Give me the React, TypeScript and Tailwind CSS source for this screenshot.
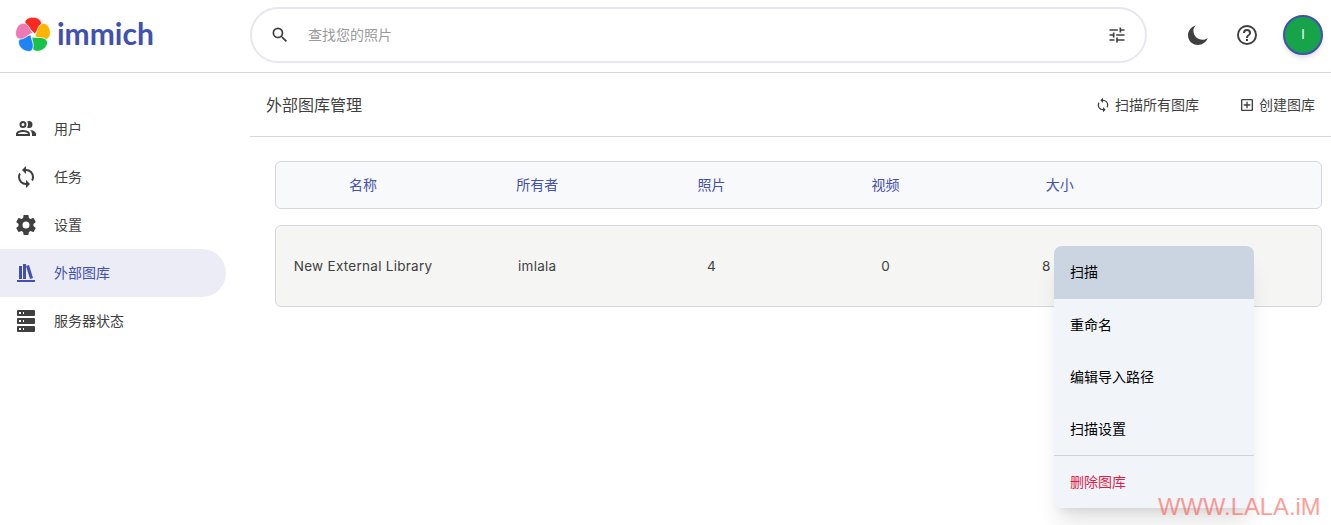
import React from "react";

const CJK = "font-['Inter','Noto_Sans_CJK_SC',sans-serif]";

const P = {
  magnify: "M9.5,3A6.5,6.5 0 0,1 16,9.5C16,11.11 15.41,12.59 14.44,13.73L14.71,14H15.5L20.5,19L19,20.5L14,15.5V14.71L13.73,14.44C12.59,15.41 11.11,16 9.5,16A6.5,6.5 0 0,1 3,9.5A6.5,6.5 0 0,1 9.5,3M9.5,5C7,5 5,7 5,9.5C5,12 7,14 9.5,14C12,14 14,12 14,9.5C14,7 12,5 9.5,5Z",
  tune: "M3,17V19H9V17H3M3,5V7H13V5H3M13,21V19H21V17H13V15H11V21H13M7,9V11H3V13H7V15H9V9H7M21,13V11H11V13H21M15,9H17V7H21V5H17V3H15V9Z",
  sync: "M12,18A6,6 0 0,1 6,12C6,11 6.25,10.03 6.7,9.2L5.24,7.74C4.46,8.97 4,10.43 4,12A8,8 0 0,0 12,20V23L16,19L12,15M12,4V1L8,5L12,9V6A6,6 0 0,1 18,12C18,13 17.75,13.97 17.3,14.8L18.76,16.26C19.54,15.03 20,13.57 20,12A8,8 0 0,0 12,4Z",
  cog: "M12,15.5A3.5,3.5 0 0,1 8.5,12A3.5,3.5 0 0,1 12,8.5A3.5,3.5 0 0,1 15.5,12A3.5,3.5 0 0,1 12,15.5M19.43,12.97C19.47,12.65 19.5,12.33 19.5,12C19.5,11.67 19.47,11.34 19.43,11L21.54,9.37C21.73,9.22 21.78,8.95 21.66,8.73L19.66,5.27C19.54,5.05 19.27,4.96 19.05,5.05L16.56,6.05C16.04,5.66 15.5,5.32 14.87,5.07L14.5,2.42C14.46,2.18 14.25,2 14,2H10C9.75,2 9.54,2.18 9.5,2.42L9.13,5.07C8.5,5.32 7.96,5.66 7.44,6.05L4.95,5.05C4.73,4.96 4.46,5.05 4.34,5.27L2.34,8.73C2.21,8.95 2.27,9.22 2.46,9.37L4.57,11C4.53,11.34 4.5,11.67 4.5,12C4.5,12.33 4.53,12.65 4.57,12.97L2.46,14.63C2.27,14.78 2.21,15.05 2.34,15.27L4.34,18.73C4.46,18.95 4.73,19.03 4.95,18.95L7.44,17.94C7.96,18.34 8.5,18.68 9.13,18.93L9.5,21.58C9.54,21.82 9.75,22 10,22H14C14.25,22 14.46,21.82 14.5,21.58L14.87,18.93C15.5,18.67 16.04,18.34 16.56,17.94L19.05,18.95C19.27,19.03 19.54,18.95 19.66,18.73L21.66,15.27C21.78,15.05 21.73,14.78 21.54,14.63L19.43,12.97Z",
  users: "M13.07 10.41A5 5 0 0 0 13.07 4.59A3.39 3.39 0 0 1 15 4A3.5 3.5 0 0 1 15 11A3.39 3.39 0 0 1 13.07 10.41M5.5 7.5A3.5 3.5 0 1 1 9 11A3.5 3.5 0 0 1 5.5 7.5M7.5 7.5A1.5 1.5 0 1 0 9 6A1.5 1.5 0 0 0 7.5 7.5M16 17V19H2V17S2 13 9 13 16 17 16 17M14 17C13.86 16.22 12.67 15 9 15S4.07 16.22 4 17M15.95 13A5.32 5.32 0 0 1 18 17V19H22V17S22 13.37 15.94 13Z",
  server: "M4,1H20A1,1 0 0,1 21,2V6A1,1 0 0,1 20,7H4A1,1 0 0,1 3,6V2A1,1 0 0,1 4,1M4,9H20A1,1 0 0,1 21,10V14A1,1 0 0,1 20,15H4A1,1 0 0,1 3,14V10A1,1 0 0,1 4,9M4,17H20A1,1 0 0,1 21,18V22A1,1 0 0,1 20,23H4A1,1 0 0,1 3,22V18A1,1 0 0,1 4,17M9,5H10V3H9V5M9,13H10V11H9V13M9,21H10V19H9V21M5,3V5H7V3H5M5,11V13H7V11H5M5,19V21H7V19H5Z",
  shelf: "M9 3V18H12V3H9M12 5L16 18L19 17L15 4L12 5M5 5V18H8V5H5M3 19V21H21V19H3Z",
  moon: "M10 2.2C5.4 3.6 2 7.5 2 12.2C2 17.6 6.4 22 11.8 22C16.4 22 20.3 19.1 21.8 15C20.4 16.1 18.6 16.8 16.6 16.8C11.6 16.8 7.4 12.8 7.4 7.8C7.4 5.6 8.4 3.6 10 2.2Z",
  help: "M11,18H13V16H11V18M12,2A10,10 0 0,0 2,12A10,10 0 0,0 12,22A10,10 0 0,0 22,12A10,10 0 0,0 12,2M12,20C7.59,20 4,16.41 4,12C4,7.59 7.59,4 12,4C16.41,4 20,7.59 20,12C20,16.41 16.41,20 12,20M12,6A4,4 0 0,0 8,10H10A2,2 0 0,1 12,8A2,2 0 0,1 14,10C14,12 11,11.75 11,15H13C13,12.75 16,12.5 16,10A4,4 0 0,0 12,6Z",
  plusBox: "M19,19V5H5V19H19M19,3A2,2 0 0,1 21,5V19A2,2 0 0,1 19,21H5C3.89,21 3,20.1 3,19V5C3,3.89 3.89,3 5,3H19M11,7H13V11H17V13H13V17H11V13H7V11H11V7Z",
};

function Icon({ d, size = 24, className = "" }: { d: string; size?: number; className?: string }) {
  return (
    <svg viewBox="0 0 24 24" width={size} height={size} fill="currentColor" className={`shrink-0 ${className}`}>
      <path d={d} />
    </svg>
  );
}

const petal = "M20 17C17 13.5 10.5 11 10 6C9.7 2.2 14 0.3 18 0.3C22.5 0.3 26.5 3 26.5 7C26.5 10.5 22.5 13 20 17Z";

function Logo() {
  const colors = ["#fa2921", "#ffb400", "#18c249", "#1e83f7", "#ed79b5"];
  return (
    <svg width="36" height="36" viewBox="0 0 36 36" className="shrink-0">
      {colors.map((c, i) => (
        <path key={c} d={petal} fill={c} stroke="white" strokeWidth="0.7" transform={`rotate(${i * 72} 18 18)`} />
      ))}
    </svg>
  );
}

function NavItem({ d, label, active = false }: { d: string; label: string; active?: boolean }) {
  return (
    <div className={`flex h-12 w-[226px] items-center gap-4 rounded-r-full pl-[14px] ${active ? "bg-[#ececf7] text-[#4250af]" : "text-[#3f3f3f]"}`}>
      <Icon d={d} />
      <span className="text-sm">{label}</span>
    </div>
  );
}

function MenuItem({ label, className = "" }: { label: string; className?: string }) {
  return <div className={`flex h-[52px] items-center px-4 text-sm text-black ${className}`}>{label}</div>;
}

export default function App() {
  const headers = ["名称", "所有者", "照片", "视频", "大小"];
  const values = ["New External Library", "imlala", "4", "0"];
  return (
    <div className={`relative h-[525px] w-[1331px] overflow-hidden bg-white ${CJK}`}>
      <header className="flex h-[73px] items-center border-b border-[#d6d6e0] pb-[2px]">
        <div className="flex w-[250px] shrink-0 items-center gap-[6px] pl-[15px]">
          <Logo />
          <span className="mb-[5px] font-['Lato',sans-serif] text-[30px] font-bold leading-none text-[#4250af]">immich</span>
        </div>
        <div className="flex h-[56px] w-[897px] items-center rounded-[28px] border-2 border-[#e7e7ee] bg-white pl-[18px] pr-[18px]">
          <Icon d={P.magnify} size={20} className="text-[#3f3f3f]" />
          <span className="ml-[18px] flex-1 text-sm text-[#9a9a9a]">查找您的照片</span>
          <Icon d={P.tune} size={20} className="text-[#3f3f3f]" />
        </div>
        <div className="ml-auto flex items-center pr-[8px]">
          <Icon d={P.moon} size={24} className="mr-[25px] text-[#3f3f3f]" />
          <Icon d={P.help} size={24} className="mr-[24px] text-[#3f3f3f]" />
          <div className="flex h-10 w-10 items-center justify-center rounded-full border-2 border-[#4250af] bg-[#16a34a] text-[13px] text-white shadow-md">I</div>
        </div>
      </header>
      <div className="flex">
        <nav className="w-[250px] shrink-0 pt-8">
          <NavItem d={P.users} label="用户" />
          <NavItem d={P.sync} label="任务" />
          <NavItem d={P.cog} label="设置" />
          <NavItem d={P.shelf} label="外部图库" active />
          <NavItem d={P.server} label="服务器状态" />
        </nav>
        <main className="min-w-0 flex-1">
          <div className="flex h-[64px] items-center justify-between border-b border-[#d6d6e0] pl-4 pr-4">
            <span className="text-base text-[#3f3f3f]">外部图库管理</span>
            <div className="flex items-center gap-10 text-sm text-[#3f3f3f]">
              <span className="flex items-center gap-1"><Icon d={P.sync} size={16} />扫描所有图库</span>
              <span className="flex items-center gap-1"><Icon d={P.plusBox} size={16} />创建图库</span>
            </div>
          </div>
          <div className="pl-[25px] pr-[9px] pt-[24px]">
            <div className="flex h-12 items-center rounded-md border border-[#d6d6e0] bg-[#f8f9fb] text-sm text-[#4250af]">
              {headers.map((h) => (
                <div key={h} className="w-1/6 text-center">{h}</div>
              ))}
            </div>
            <div className="mt-4 flex h-[82px] items-center rounded-md border border-[#d6d6e0] bg-[#f5f5f3] pt-px text-[13.5px] tracking-[0.02em] text-[#3f3f3f]">
              {values.map((v) => (
                <div key={v} className="w-1/6 text-center">{v}</div>
              ))}
              <div className="w-1/6 pr-[27px] text-center">8</div>
            </div>
          </div>
        </main>
      </div>
      <div className="absolute left-[1054px] top-[246px] w-[200px] overflow-hidden rounded-lg bg-[#f1f5f9] shadow-xl">
        <MenuItem label="扫描" className="h-[53px] bg-[#cbd5e1] pb-px" />
        <MenuItem label="重命名" />
        <MenuItem label="编辑导入路径" />
        <MenuItem label="扫描设置" />
        <div className="h-px bg-[#cfd3de]" />
        <MenuItem label="删除图库" className="!text-[#e11d48]" />
      </div>
      <div className="absolute left-[1158px] top-[495px] font-['Liberation_Sans',sans-serif] text-[23.8px] leading-none text-[#ff3b30]/50">WWW.LALA.iM</div>
    </div>
  );
}
